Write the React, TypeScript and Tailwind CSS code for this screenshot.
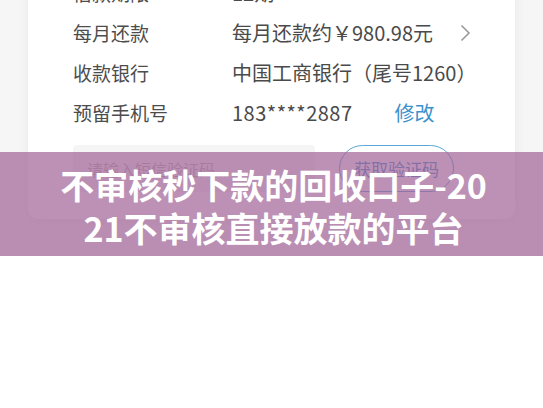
import React from 'react'

const font = "font-['Noto_Sans_CJK_SC','Noto_Sans',sans-serif]"

function Row({label, children}: {label: string; children: React.ReactNode}) {
  return (
    <div className="flex h-[40px] items-center">
      <div className="w-[159px] shrink-0 text-[19px] text-[#4d4d4d]">{label}</div>
      <div className="flex flex-1 items-center text-[20px] text-[#4a4a4a]">{children}</div>
    </div>
  )
}

export default function App() {
  return (
    <div className={`w-[543px] h-[408px] overflow-hidden bg-white ${font}`}>
      <div className="relative h-[256px] overflow-hidden bg-[#f6f6f6]">
        <div className="mx-[28px] -mt-[27px] rounded-b-[10px] bg-white pl-[45px] pr-[44px] pb-[27px] shadow-[0_2px_14px_rgba(0,0,0,0.06)]">
          <Row label="借款期限">12期</Row>
          <Row label="每月还款">
            <span>每月还款约￥980.98元</span>
            <div className="flex-1" />
            <svg width="11" height="18" viewBox="0 0 11 18" fill="none">
              <path d="M1.5 1.5 L9 9 L1.5 16.5" stroke="#9a9a9a" strokeWidth="1.6" />
            </svg>
          </Row>
          <Row label="收款银行">中国工商银行（尾号1260）</Row>
          <Row label="预留手机号">
            <span className="tracking-[0.5px]">183****2887</span>
            <span className="ml-[42px] text-[#3b92cc]">修改</span>
          </Row>
          <div className="mt-[12px] flex h-[47px] items-stretch">
            <div className="flex w-[242px] items-center rounded-[4px] bg-[#f5f5f5] pl-[14px] text-[16px] text-[#b5b5b5]">
              请输入短信验证码
            </div>
            <button className="ml-[24px] w-[115px] rounded-full border border-[#5aa8d8] text-[17px] text-[#3b92cc]">
              获取验证码
            </button>
          </div>
        </div>
        <div className="absolute inset-x-0 bottom-0 flex h-[104px] items-center justify-center bg-[rgba(161,98,149,0.7)] pl-[54px] pr-[50px] pt-[4px]">
          <h1 className="break-all text-center text-[34px] font-bold leading-[43px] text-white">
            不审核秒下款的回收口子-2021不审核直接放款的平台
          </h1>
        </div>
      </div>
    </div>
  )
}
